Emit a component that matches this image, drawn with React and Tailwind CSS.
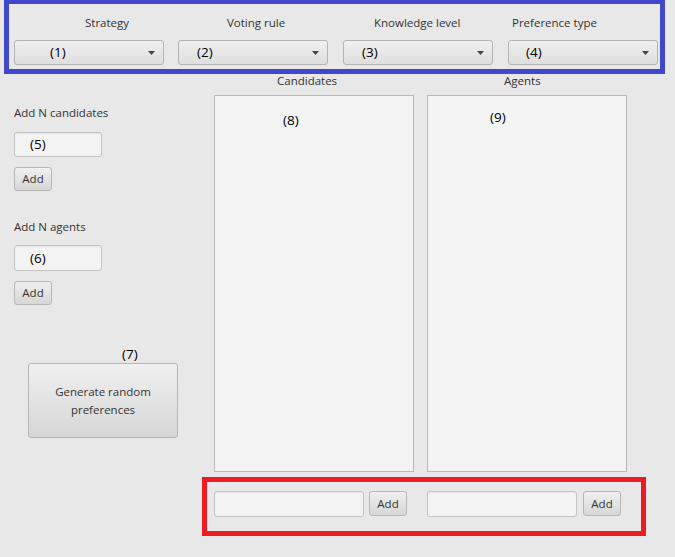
import React from "react";

const Arrow = () => (
  <svg width="7" height="4" viewBox="0 0 7 4" className="block">
    <path d="M0 0 L7 0 L3.5 4 Z" fill="#444" />
  </svg>
);

const Combo = ({ label, labelPad, value, valuePad, className = "" }) => (
  <div className={`flex flex-col w-[150px] ${className}`}>
    <div className="h-[16px] leading-[16px] text-[#333]" style={{ paddingLeft: labelPad }}>
      {label}
    </div>
    <div className="mt-[9px] h-[25px] rounded-[3px] border border-[#b4b4b4] bg-gradient-to-b from-[#f0f0f0] to-[#dedede] flex items-center pr-[8px]">
      <span className="text-[13.5px] text-black flex-1" style={{ paddingLeft: valuePad }}>
        {value}
      </span>
      <Arrow />
    </div>
  </div>
);

const TextBox = ({ className = "", children }) => (
  <div
    className={`rounded-[3px] border border-[#c3c3c3] bg-[#f3f3f3] shadow-[inset_0_1px_1px_rgba(0,0,0,0.05)] flex items-center ${className}`}
  >
    {children}
  </div>
);

const Button = ({ className = "", children }) => (
  <div
    className={`rounded-[3px] border border-[#b6b6b6] bg-gradient-to-b from-[#f0f0f0] to-[#d6d6d6] flex items-center justify-center text-[#333] ${className}`}
  >
    {children}
  </div>
);

export default function App() {
  return (
    <div className="w-[675px] h-[557px] overflow-hidden bg-[#e8e8e8] text-[11.5px] font-['Open_Sans',sans-serif] text-[#333]">
      {/* top selectors */}
      <div className="ml-[4px] mt-[-1px] w-[661px] h-[75px] border-[5px] border-[#3f48cc] pt-[11px] pl-[5px]">
        <div className="flex">
          <Combo label="Strategy" labelPad={71} value="(1)" valuePad={35} />
          <Combo label="Voting rule" labelPad={49} value="(2)" valuePad={18} className="ml-[14px]" />
          <Combo label="Knowledge level" labelPad={31} value="(3)" valuePad={18} className="ml-[15px]" />
          <Combo label="Preference type" labelPad={4} value="(4)" valuePad={17} className="ml-[15px]" />
        </div>
      </div>

      <div className="flex">
        {/* left controls */}
        <div className="w-[202px] flex flex-col pt-[31px] pl-[14px]">
          <div className="h-[16px] leading-[16px]">Add N candidates</div>
          <TextBox className="mt-[11px] w-[88px] h-[25px] pl-[15px] text-[13.5px] text-black">(5)</TextBox>
          <Button className="mt-[10px] w-[38px] h-[24px]">Add</Button>
          <div className="mt-[28px] h-[16px] leading-[16px]">Add N agents</div>
          <TextBox className="mt-[10px] w-[88px] h-[26px] pl-[15px] text-[13.5px] text-black">(6)</TextBox>
          <Button className="mt-[10px] w-[38px] h-[24px]">Add</Button>
          <div className="mt-[41px] h-[16px] leading-[16px] pl-[108px] text-[13.5px] text-black">(7)</div>
          <Button className="mt-[1px] ml-[14px] w-[150px] h-[75px] text-center leading-[18px]">
            Generate random
            <br />
            preferences
          </Button>
        </div>

        {/* lists */}
        <div className="flex flex-col">
          <div className="pl-[12px] flex gap-[13px]">
            <div className="w-[200px] flex flex-col">
              <div className="h-[14px] leading-[14px] pl-[63px]">Candidates</div>
              <div className="mt-[7px] h-[377px] border border-[#b9b9b9] bg-[#f3f3f3] pt-[14px] pl-[68px] text-[13.5px] text-black">
                (8)
              </div>
            </div>
            <div className="w-[200px] flex flex-col">
              <div className="h-[14px] leading-[14px] pl-[77px]">Agents</div>
              <div className="mt-[7px] h-[377px] border border-[#b9b9b9] bg-[#f3f3f3] pt-[11px] pl-[62px] text-[13.5px] text-black">
                (9)
              </div>
            </div>
          </div>

          {/* bottom add row */}
          <div className="mt-[5px] w-[444px] h-[59px] border-[5px] border-[#ed1c24] pt-[9px] pl-[7px] flex items-start">
            <TextBox className="w-[150px] h-[26px]" />
            <Button className="ml-[5px] w-[38px] h-[25px]">Add</Button>
            <TextBox className="ml-[20px] w-[150px] h-[26px]" />
            <Button className="ml-[6px] w-[38px] h-[25px]">Add</Button>
          </div>
        </div>
      </div>
    </div>
  );
}
